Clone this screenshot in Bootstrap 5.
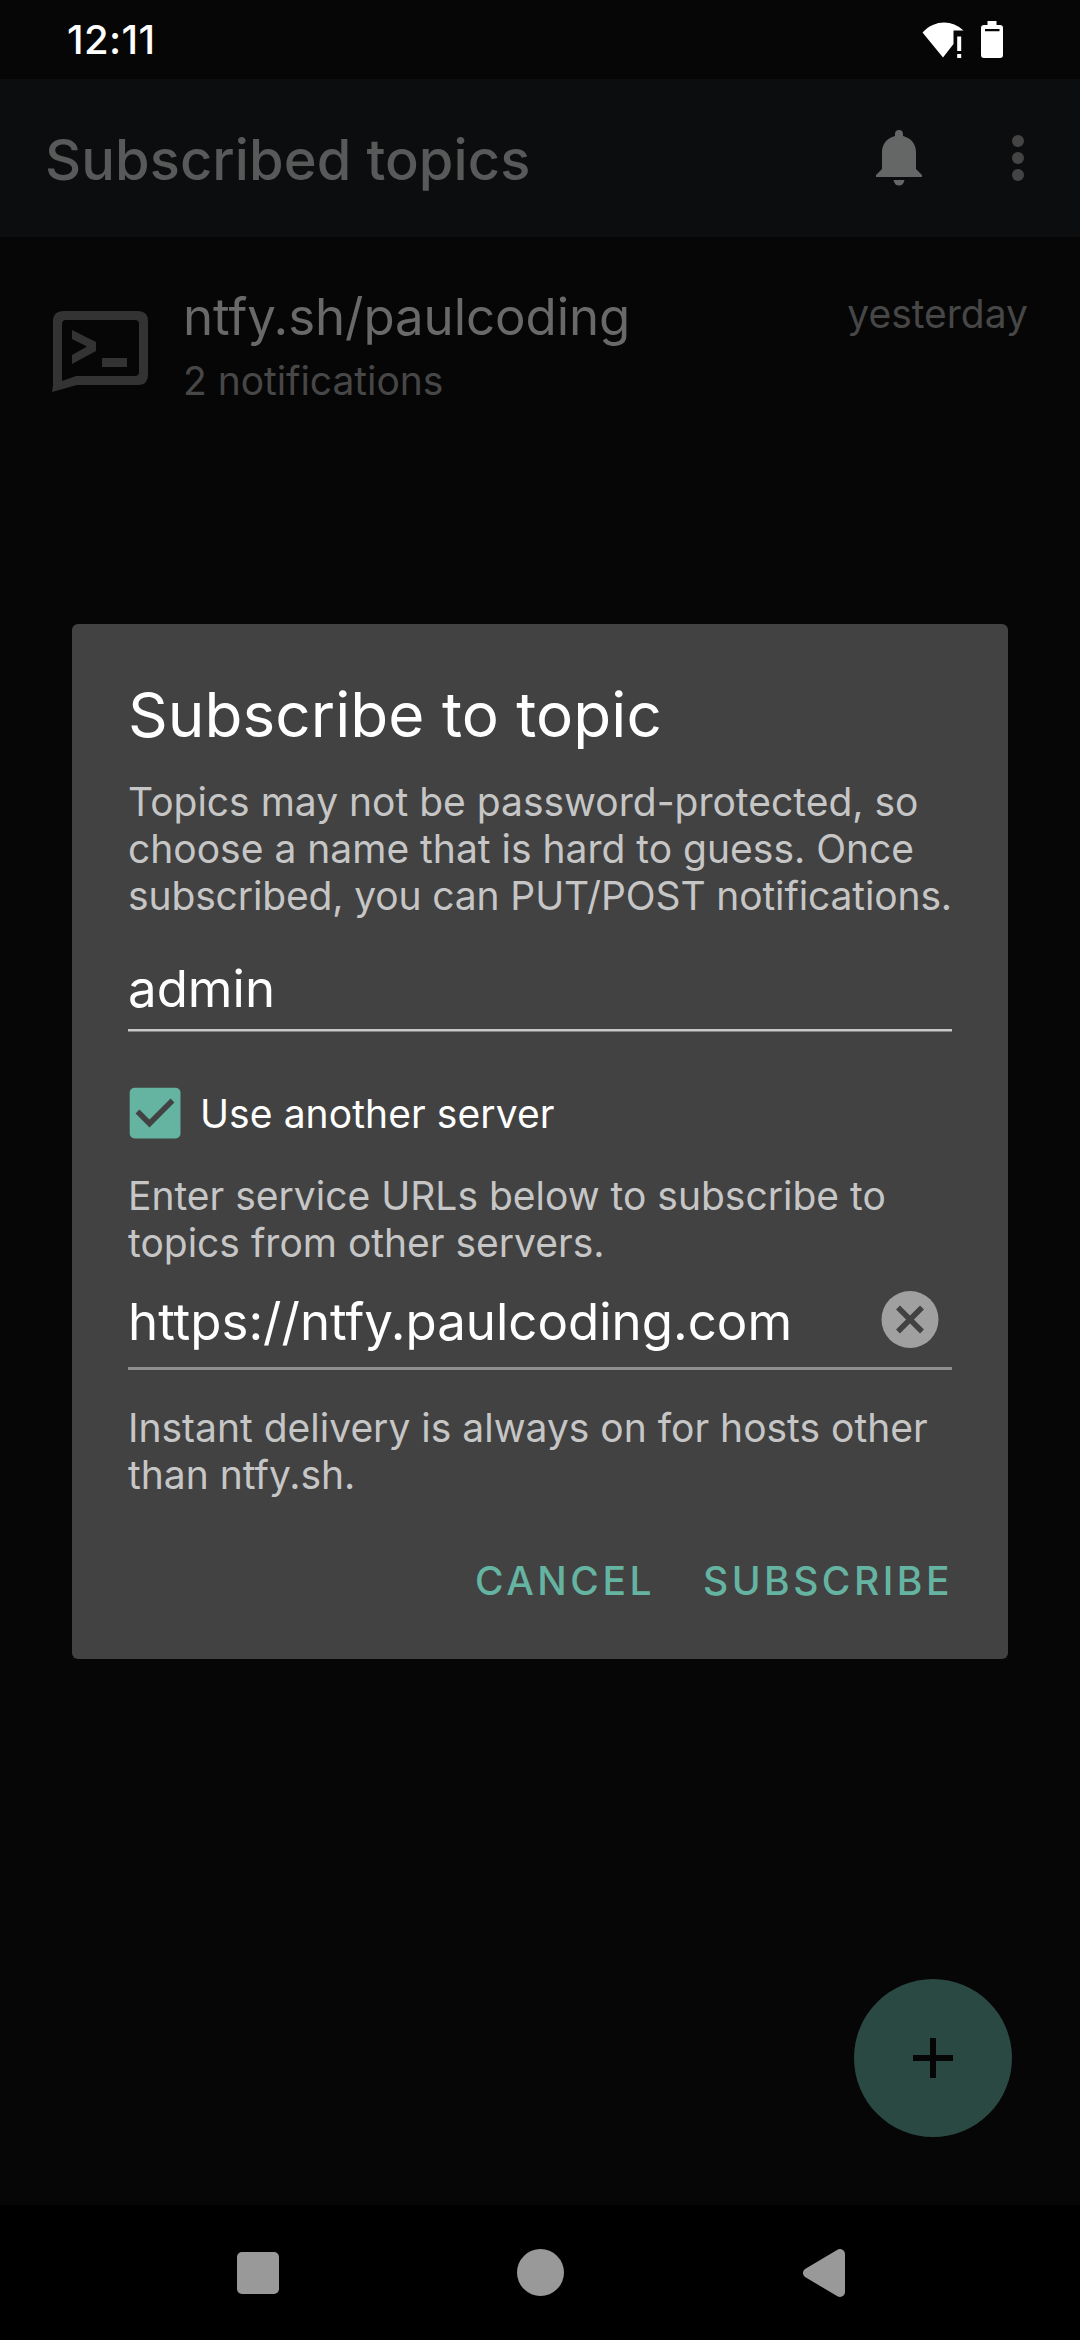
<!DOCTYPE html>
<html lang="en" data-bs-theme="dark">
<head>
<meta charset="utf-8">
<meta name="viewport" content="width=device-width, initial-scale=1">
<title>Subscribed topics</title>
<link rel="stylesheet" href="https://cdn.jsdelivr.net/npm/bootstrap@5.3.0/dist/css/bootstrap.min.css">
<style>
  body { font-family: Inter, "Noto Sans", sans-serif; background: #060606; color: #fff; font-size: 39px; line-height: 47px; }
  svg { display: block; flex: none; }
  .screen { width: 1080px; height: 2340px; }
  .status { height: 79px; padding: 0 76px 0 67px; }
  .status-time { font-size: 40px; font-weight: 500; letter-spacing: .4px; padding-bottom: 1px; }
  .topbar { height: 158px; padding: 0 56px 0 45px; background: #0c0d0e; }
  .topbar-title { font-size: 56px; line-height: 68px; font-weight: 500; letter-spacing: .08px; color: #585959; padding-top: 3px; }
  .topic { padding: 50px 52px 0 50px; height: 387px; }
  .topic-icon { margin: 20px 32px 0 0; }
  .topic-name { font-size: 51px; line-height: 60px; letter-spacing: -.08px; color: #696969; }
  .topic-sub { color: #474747; padding-top: 10px; letter-spacing: -.05px; }
  .topic-date { color: #474747; padding-top: 3px; }
  .sheet { width: 936px; height: 1035px; margin: 0 72px; padding: 55px 56px 0; background: #424242; border-radius: 6px; }
  .sheet-title { font-size: 62px; line-height: 72px; font-weight: 400; letter-spacing: .05px; margin-bottom: 27px; }
  .hint { color: #c6c6c6; white-space: nowrap; }
  .hint-tight { letter-spacing: -.13px; }
  .field { font-size: 51px; line-height: 60px; }
  .field-topic { margin-top: 40px; padding-bottom: 10px; border-bottom: 2px solid #c8c8c8; box-shadow: 0 1px #858585; }
  .field-server { margin-top: 16px; height: 88px; padding: 9px 13px 0 0; border-bottom: 3px solid #8f8f8f; }
  .field-url { padding-top: 1px; }
  .other { margin: 56px 0 33px; height: 52px; padding-left: 1px; }
  .other-label { letter-spacing: .08px; padding: 1px 0 0 19px; }
  .delivery { margin-top: 34px; }
  .actions { margin-top: 59px; gap: 49px; }
  .action { font-weight: 500; letter-spacing: 3.5px; color: #65b4a2; margin-right: -1px; padding: 0; border: 0; background: none; line-height: 47px; }
  .fab { width: 158px; height: 158px; margin: 0 68px 68px 0; background: #2a4942; }
  .nav-keys { height: 135px; background: #000; padding: 0 235px 0 237px; }
</style>
</head>
<body>
<div class="screen d-flex flex-column overflow-hidden">
  <header class="status d-flex align-items-center justify-content-between">
    <span class="status-time">12:11</span>
    <div class="d-flex align-items-center">
      <svg width="42" height="38" viewBox="0 0 42 38"><path fill="#fff" d="M.5 11.500C12.500-1.500 30-1.500 41.500 9.500H31.500V23L21 36.500Z"/><path fill="#fff" d="M35.200 15.500h4V30h-4zM35.200 33h4v4h-4z"/></svg>
      <svg class="ms-3" width="24" height="38" viewBox="0 0 24 38"><path fill="#fff" fill-rule="evenodd" d="M7.500 0h9v4H20q3 0 3 3V34q0 3-3 3H4q-3 0-3-3V7q0-3 3-3h3.500zM5 8v2.200h14.500V8z"/></svg>
    </div>
  </header>

  <nav class="topbar d-flex align-items-center justify-content-between">
    <div class="topbar-title">Subscribed topics</div>
    <div class="d-flex align-items-center">
      <svg width="46" height="56" viewBox="0 0 46 56"><path fill="#656666" d="M0 47v-2l6-6V22C6 14 11 8 19 6V4a4 4 0 0 1 8 0v2c8 2 13 8 13 16v17l6 6v2zM17.500 50h11q-1 5.500-5.500 5.500T17.500 50z"/></svg>
      <svg width="102" height="48" viewBox="0 0 102 48" fill="#444"><circle cx="96" cy="7" r="6"/><circle cx="96" cy="24" r="6"/><circle cx="96" cy="41" r="6"/></svg>
    </div>
  </nav>

  <section class="topic d-flex align-items-start">
    <svg class="topic-icon" width="101" height="86" viewBox="0 0 101 86"><path fill="#333" fill-rule="evenodd" d="M14 4H88Q98 4 98 14V68Q98 78 88 78H27L2 85 3 78V14Q3 4 14 4zM16 13Q12 13 12 17V74L26 69H85Q89 69 89 65V17Q89 13 85 13z"/><path fill="#333" d="M22 23 46 35v9L22 57V48L37 39.500 22 32zM52 51H77v9H52z"/></svg>
    <div class="flex-grow-1">
      <div class="topic-name">ntfy.sh/paulcoding</div>
      <div class="topic-sub">2 notifications</div>
    </div>
    <div class="topic-date">yesterday</div>
  </section>

  <main class="sheet">
    <h1 class="sheet-title">Subscribe to topic</h1>
    <div class="hint">Topics may not be password-protected, so<br>choose a name that is hard to guess. Once<br><span class="hint-tight">subscribed, you can PUT/POST notifications.</span></div>
    <div class="field field-topic">admin</div>
    <div class="other d-flex align-items-center">
      <svg width="52" height="52" viewBox="0 0 52 52"><rect x=".7" y=".7" width="50.800" height="50.800" rx="5" fill="#65b4a2"/><path d="M8.500 24.500 20.500 36.500 43.500 13.500" fill="none" stroke="#424242" stroke-width="5.500"/></svg>
      <span class="other-label">Use another server</span>
    </div>
    <div class="hint">Enter service URLs below to subscribe to<br>topics from other servers.</div>
    <div class="field field-server d-flex align-items-start justify-content-between">
      <span class="field-url">https://ntfy.paulcoding.com</span>
      <svg width="58" height="58" viewBox="0 0 58 58"><circle cx="29" cy="28.500" r="28.500" fill="#a0a0a0"/><path d="M17 16.500 41 40.500M41 16.500 17 40.500" stroke="#424242" stroke-width="5.500"/></svg>
    </div>
    <div class="hint delivery">Instant delivery is always on for hosts other<br>than ntfy.sh.</div>
    <div class="actions d-flex justify-content-end">
      <button class="action">CANCEL</button>
      <button class="action">SUBSCRIBE</button>
    </div>
  </main>

  <div class="fab rounded-circle d-flex align-items-center justify-content-center mt-auto ms-auto">
    <svg width="40" height="40" viewBox="0 0 40 40"><path d="M20 0V40M0 20H40" stroke="#060606" stroke-width="6"/></svg>
  </div>

  <footer class="nav-keys d-flex align-items-center justify-content-between">
    <svg width="42" height="42" viewBox="0 0 42 42"><rect width="42" height="42" rx="5" fill="#999"/></svg>
    <svg width="49" height="47" viewBox="0 0 49 47"><circle cx="23.500" cy="23.500" r="23.500" fill="#999"/></svg>
    <svg width="42" height="48" viewBox="0 0 42 48"><path d="M5 24 37 5V43Z" fill="#999" stroke="#999" stroke-width="10" stroke-linejoin="round"/></svg>
  </footer>
</div>
<script src="https://cdn.jsdelivr.net/npm/bootstrap@5.3.0/dist/js/bootstrap.bundle.min.js"></script>
</body>
</html>
